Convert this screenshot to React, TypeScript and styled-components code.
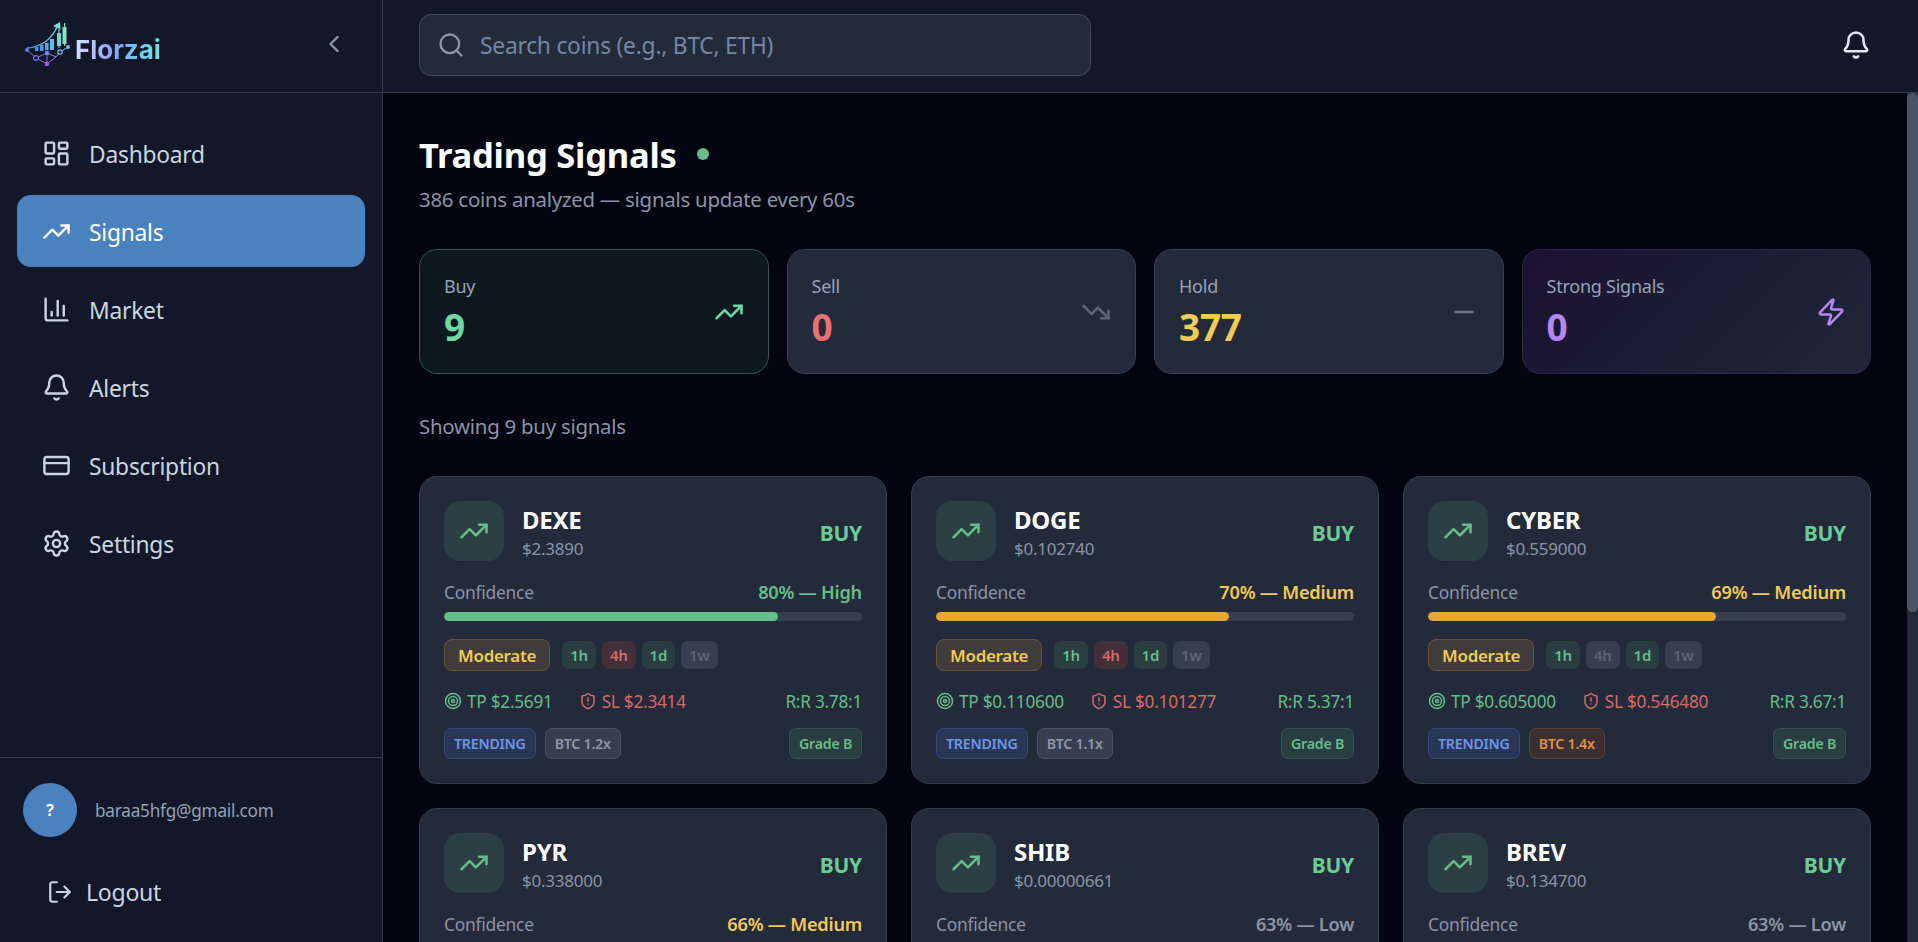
import React from 'react';
import styled, { createGlobalStyle } from 'styled-components';
import {
  Bell,
  ChartColumn,
  ChevronLeft,
  CreditCard,
  LayoutDashboard,
  LogOut,
  Minus,
  Search,
  Settings,
  ShieldAlert,
  Target,
  TrendingDown,
  TrendingUp,
  Zap,
} from 'lucide-react';

const GREEN = '#66bd8a';
const RED = '#d86a6a';
const AMBER = '#f0cb55';
const MUTED = '#8b95a7';

const GlobalStyle = createGlobalStyle`
  html, body {
    margin: 0;
    height: 100%;
    overflow: hidden;
    background: #02040f;
    font-family: 'Noto Sans', 'Open Sans', sans-serif;
    letter-spacing: -0.015em;
  }
  * { box-sizing: border-box; }
`;

const NAV = [
  { label: 'Dashboard', icon: LayoutDashboard },
  { label: 'Signals', icon: TrendingUp, active: true },
  { label: 'Market', icon: ChartColumn },
  { label: 'Alerts', icon: Bell },
  { label: 'Subscription', icon: CreditCard },
  { label: 'Settings', icon: Settings },
];

const SIGNALS = [
  { sym: 'DEXE', price: '$2.3890', pct: 80, level: 'High', tf: 'grgn', tp: '$2.5691', sl: '$2.3414', rr: '3.78', btc: '1.2x', hot: false },
  { sym: 'DOGE', price: '$0.102740', pct: 70, level: 'Medium', tf: 'grgn', tp: '$0.110600', sl: '$0.101277', rr: '5.37', btc: '1.1x', hot: false },
  { sym: 'CYBER', price: '$0.559000', pct: 69, level: 'Medium', tf: 'gngn', tp: '$0.605000', sl: '$0.546480', rr: '3.67', btc: '1.4x', hot: true },
  { sym: 'PYR', price: '$0.338000', pct: 66, level: 'Medium', tf: 'gngn', tp: '$0.361000', sl: '$0.331000', rr: '3.20', btc: '1.2x', hot: false },
  { sym: 'SHIB', price: '$0.00000661', pct: 63, level: 'Low', tf: 'gngn', tp: '$0.00000712', sl: '$0.00000648', rr: '3.92', btc: '1.1x', hot: false },
  { sym: 'BREV', price: '$0.134700', pct: 63, level: 'Low', tf: 'gngn', tp: '$0.144200', sl: '$0.131900', rr: '3.39', btc: '1.3x', hot: false },
];

function levelColor(level: string) {
  if (level === 'High') return GREEN;
  if (level === 'Medium') return AMBER;
  return MUTED;
}

function barColor(level: string) {
  if (level === 'High') return GREEN;
  if (level === 'Medium') return '#e9a63c';
  return '#7d8698';
}

function Logo() {
  return (
    <svg width="48" height="46" viewBox="0 0 48 46" fill="none">
      <defs>
        <linearGradient id="lgArrow" x1="0" y1="30" x2="36" y2="2" gradientUnits="userSpaceOnUse">
          <stop offset="0" stopColor="#4f7fe0" />
          <stop offset="1" stopColor="#6fe3d8" />
        </linearGradient>
        <linearGradient id="lgBars" x1="10" y1="0" x2="44" y2="0" gradientUnits="userSpaceOnUse">
          <stop offset="0" stopColor="#4a7fe6" />
          <stop offset="0.6" stopColor="#5cc6e8" />
          <stop offset="1" stopColor="#8ef0a8" />
        </linearGradient>
        <linearGradient id="lgNet" x1="2" y1="0" x2="44" y2="0" gradientUnits="userSpaceOnUse">
          <stop offset="0" stopColor="#7a6cf0" />
          <stop offset="0.5" stopColor="#9a5fe0" />
          <stop offset="1" stopColor="#6fc8e8" />
        </linearGradient>
      </defs>
      <path d="M3 28C17 27 28 19 34 5" stroke="url(#lgArrow)" strokeWidth="1.4" />
      <path d="M29 6L36 2L36.5 9.5Z" fill="#6fe3d8" />
      <g fill="url(#lgBars)">
        <rect x="11" y="27" width="3.5" height="4" />
        <rect x="16" y="25" width="3.5" height="6" />
        <rect x="21" y="23" width="3.5" height="7" />
        <rect x="26" y="19" width="4" height="11" />
        <rect x="33" y="13" width="4" height="13" />
        <rect x="34.4" y="9" width="1.2" height="19" />
        <rect x="38.5" y="7" width="4" height="17" />
        <rect x="40" y="3" width="1.2" height="23" />
      </g>
      <g stroke="url(#lgNet)" strokeWidth="1">
        <path d="M3 30L12 38L23 33L23 44L12 38M23 44L32 37L23 33M32 37L36 32L44 27" />
      </g>
      <circle cx="3" cy="30" r="2" fill="#6d78ee" />
      <circle cx="12" cy="38" r="2.4" fill="#12182a" stroke="#7c6cf0" strokeWidth="1.2" />
      <circle cx="23" cy="33" r="2.2" fill="#5aa0e8" />
      <circle cx="23" cy="44" r="2.2" fill="#a05ce0" />
      <circle cx="36" cy="32" r="2.2" fill="#12182a" stroke="#7cc4e8" strokeWidth="1.2" />
      <circle cx="44" cy="27" r="1.9" fill="#7cc4e8" />
    </svg>
  );
}

function SignalCard({ item }: { item: (typeof SIGNALS)[number] }) {
  const labels = ['1h', '4h', '1d', '1w'];
  return (
    <Card>
      <CardHead>
        <CoinIcon>
          <TrendingUp size={30} />
        </CoinIcon>
        <CoinText>
          <CoinName>{item.sym}</CoinName>
          <CoinPrice>{item.price}</CoinPrice>
        </CoinText>
        <Action>BUY</Action>
      </CardHead>
      <ConfRow>
        <ConfLabel>Confidence</ConfLabel>
        <ConfValue $color={levelColor(item.level)}>
          {item.pct}% — {item.level}
        </ConfValue>
      </ConfRow>
      <Track>
        <Fill $color={barColor(item.level)} style={{ width: `${item.pct}%` }} />
      </Track>
      <TagRow>
        <Strength>Moderate</Strength>
        {labels.map((label, i) => (
          <Chip key={label} $kind={item.tf[i]}>
            {label}
          </Chip>
        ))}
      </TagRow>
      <LevelRow>
        <Level $color={GREEN}>
          <Target size={18} />
          TP {item.tp}
        </Level>
        <Level $color={RED}>
          <ShieldAlert size={18} />
          SL {item.sl}
        </Level>
        <Ratio>R:R {item.rr}:1</Ratio>
      </LevelRow>
      <BadgeRow>
        <Badge $bg="#2a3655" $border="#35477a" $color="#6f98e8">TRENDING</Badge>
        {item.hot ? (
          <Badge $bg="#3a2f33" $border="#5a4238" $color="#e0914a">BTC {item.btc}</Badge>
        ) : (
          <Badge $bg="#363e50" $border="#4a5264" $color="#8f98a9">BTC {item.btc}</Badge>
        )}
        <GradeBadge>Grade B</GradeBadge>
      </BadgeRow>
    </Card>
  );
}

export default function App() {
  return (
    <Shell>
      <GlobalStyle />
      <Sidebar>
        <Brand>
          <BrandMark>
            <Logo />
            <BrandName>Florzai</BrandName>
          </BrandMark>
          <Collapse>
            <ChevronLeft size={28} />
          </Collapse>
        </Brand>
        <Nav>
          {NAV.map(({ label, icon: Icon, active }) => (
            <NavItem key={label} $active={active}>
              <Icon size={29} />
              <NavLabel>{label}</NavLabel>
            </NavItem>
          ))}
        </Nav>
        <Account>
          <User>
            <Avatar>?</Avatar>
            <Email>baraa5hfg@gmail.com</Email>
          </User>
          <Logout>
            <LogOut size={26} />
            Logout
          </Logout>
        </Account>
      </Sidebar>
      <Column>
        <TopBar>
          <SearchBox>
            <Search size={28} />
            <SearchText>Search coins (e.g., BTC, ETH)</SearchText>
          </SearchBox>
          <BellButton>
            <Bell size={30} />
          </BellButton>
        </TopBar>
        <Body>
          <Content>
            <TitleRow>
              <Title>Trading Signals</Title>
              <LiveDot />
            </TitleRow>
            <Subtitle>386 coins analyzed — signals update every 60s</Subtitle>
            <Stats>
              <Stat $bg="#0e1820" $border="#2d5a4c">
                <div>
                  <StatLabel>Buy</StatLabel>
                  <StatValue $color="#6ed8a0">9</StatValue>
                </div>
                <StatIcon $color="#6ed8a0"><TrendingUp size={30} /></StatIcon>
              </Stat>
              <Stat $bg="#232a3a" $border="#384154">
                <div>
                  <StatLabel>Sell</StatLabel>
                  <StatValue $color="#e57373">0</StatValue>
                </div>
                <StatIcon $color="#5d6679"><TrendingDown size={30} /></StatIcon>
              </Stat>
              <Stat $bg="#232a3a" $border="#384154">
                <div>
                  <StatLabel>Hold</StatLabel>
                  <StatValue $color={AMBER}>377</StatValue>
                </div>
                <StatIcon $color="#6b7485"><Minus size={30} /></StatIcon>
              </Stat>
              <Stat $bg="linear-gradient(135deg, #1a1130 0%, #202738 100%)" $border="#2f2650">
                <div>
                  <StatLabel>Strong Signals</StatLabel>
                  <StatValue $color="#b388f0">0</StatValue>
                </div>
                <StatIcon $color="#b388f0"><Zap size={30} /></StatIcon>
              </Stat>
            </Stats>
            <Showing>Showing 9 buy signals</Showing>
            <Grid>
              {SIGNALS.map((item) => (
                <SignalCard key={item.sym} item={item} />
              ))}
            </Grid>
          </Content>
          <ScrollRail>
            <ScrollThumb />
          </ScrollRail>
        </Body>
      </Column>
    </Shell>
  );
}

const Shell = styled.div`
  display: flex;
  height: 942px;
  overflow: hidden;
`;

const Sidebar = styled.aside`
  display: flex;
  flex-direction: column;
  flex: 0 0 383px;
  background: #12182a;
  border-right: 1px solid #343b4c;
`;

const Brand = styled.div`
  display: flex;
  align-items: center;
  justify-content: space-between;
  height: 93px;
  padding: 0 34px 0 24px;
  border-bottom: 1px solid #343b4c;
`;

const BrandMark = styled.div`
  display: flex;
  align-items: flex-end;
  gap: 3px;
  margin-bottom: 6px;
`;

const BrandName = styled.span`
  font-family: 'Inter', sans-serif;
  font-size: 26px;
  font-weight: 700;
  line-height: 32px;
  letter-spacing: 0;
  background: linear-gradient(100deg, #d8e6fc 0%, #939ff7 45%, #74c8f0 70%, #74e4d4 100%);
  -webkit-background-clip: text;
  background-clip: text;
  color: transparent;
`;

const Collapse = styled.div`
  display: flex;
  margin-bottom: 4px;
  color: #8b95a7;
`;

const Nav = styled.nav`
  display: flex;
  flex-direction: column;
  flex: 1;
  gap: 6px;
  padding: 24px 17px 0;
`;

const NavItem = styled.a<{ $active?: boolean }>`
  display: flex;
  align-items: center;
  gap: 18px;
  height: 72px;
  padding: 0 25px;
  border-radius: 14px;
  font-size: 22.8px;
  color: ${(p) => (p.$active ? '#ffffff' : '#cbd5e1')};
  background: ${(p) => (p.$active ? '#4a82c0' : 'transparent')};
`;

const NavLabel = styled.span`
  padding-top: 2px;
`;

const Account = styled.div`
  height: 185px;
  padding: 25px 23px 0;
  border-top: 1px solid #343b4c;
`;

const User = styled.div`
  display: flex;
  align-items: center;
  gap: 18px;
`;

const Avatar = styled.div`
  display: flex;
  align-items: center;
  justify-content: center;
  width: 54px;
  height: 54px;
  border-radius: 50%;
  background: #4a82c0;
  color: #ffffff;
  font-size: 16px;
  font-weight: 700;
`;

const Email = styled.span`
  font-size: 17.2px;
  color: #94a3b8;
`;

const Logout = styled.div`
  display: flex;
  align-items: center;
  gap: 13px;
  margin: 39px 0 0 24px;
  font-size: 23px;
  color: #cbd5e1;
`;

const Column = styled.div`
  display: flex;
  flex-direction: column;
  flex: 1;
  min-width: 0;
`;

const TopBar = styled.header`
  display: flex;
  flex: 0 0 93px;
  align-items: center;
  justify-content: space-between;
  padding: 0 47px 2px 36px;
  background: #12182a;
  border-bottom: 1px solid #343b4c;
`;

const SearchBox = styled.div`
  display: flex;
  align-items: center;
  gap: 15px;
  width: 672px;
  height: 62px;
  padding: 0 17px;
  border-radius: 12px;
  border: 1px solid #414a5c;
  background: #232a3a;
  color: #8b95a7;
`;

const SearchText = styled.span`
  font-size: 22.8px;
  color: #7488a6;
`;

const BellButton = styled.div`
  display: flex;
  color: #e2e8f0;
`;

const Body = styled.div`
  display: flex;
  flex: 1;
  min-height: 0;
`;

const Content = styled.main`
  flex: 1;
  min-width: 0;
  overflow: hidden;
  padding: 36px;
  background: #02040f;
`;

const ScrollRail = styled.div`
  flex: 0 0 11px;
  background: #232a3a;
`;

const ScrollThumb = styled.div`
  height: 519px;
  border-radius: 6px;
  background: #4b5568;
`;

const TitleRow = styled.div`
  display: flex;
  align-items: center;
  gap: 20px;
  height: 50px;
`;

const Title = styled.h1`
  margin: 0;
  font-size: 34.6px;
  font-weight: 700;
  color: #ffffff;
`;

const LiveDot = styled.span`
  width: 12px;
  height: 12px;
  border-radius: 50%;
  background: ${GREEN};
`;

const Subtitle = styled.p`
  margin: 7px 0 0;
  font-size: 20.4px;
  line-height: 26px;
  color: ${MUTED};
`;

const Stats = styled.div`
  display: grid;
  grid-template-columns: repeat(4, 1fr);
  gap: 18px;
  margin-top: 37px;
`;

const Stat = styled.div<{ $bg: string; $border: string }>`
  display: flex;
  align-items: center;
  justify-content: space-between;
  height: 125px;
  padding: 0 24px;
  border-radius: 18px;
  background: ${(p) => p.$bg};
  border: 1px solid ${(p) => p.$border};
`;

const StatLabel = styled.div`
  font-size: 18px;
  line-height: 24px;
  margin-top: 2px;
  margin-bottom: 5px;
  color: #94a3b8;
`;

const StatValue = styled.div<{ $color: string }>`
  font-size: 37px;
  font-weight: 700;
  line-height: 48px;
  color: ${(p) => p.$color};
`;

const StatIcon = styled.div<{ $color: string }>`
  display: flex;
  color: ${(p) => p.$color};
`;

const Showing = styled.div`
  margin: 39px 0 0;
  font-size: 20.4px;
  line-height: 26px;
  color: ${MUTED};
`;

const Grid = styled.div`
  display: grid;
  grid-template-columns: repeat(3, 1fr);
  gap: 24px;
  margin-top: 37px;
`;

const Card = styled.article`
  display: flex;
  flex-direction: column;
  height: 308px;
  padding: 24px;
  border-radius: 18px;
  background: #232a3a;
  border: 1px solid #2f4048;
`;

const CardHead = styled.div`
  display: flex;
  align-items: center;
  height: 60px;
`;

const CoinIcon = styled.div`
  display: flex;
  align-items: center;
  justify-content: center;
  flex: 0 0 60px;
  height: 60px;
  border-radius: 16px;
  background: #2c3f44;
  color: ${GREEN};
`;

const CoinText = styled.div`
  flex: 1;
  margin-left: 18px;
  padding-top: 4px;
`;

const CoinName = styled.div`
  font-size: 24px;
  font-weight: 700;
  line-height: 30px;
  color: #ffffff;
`;

const CoinPrice = styled.div`
  margin-top: 2px;
  font-size: 17px;
  line-height: 24px;
  color: ${MUTED};
`;

const Action = styled.div`
  margin-top: 4px;
  font-size: 21px;
  font-weight: 700;
  color: #6ccb96;
`;

const ConfRow = styled.div`
  display: flex;
  justify-content: space-between;
  margin-top: 19px;
  line-height: 24px;
  font-size: 17.4px;
`;

const ConfLabel = styled.span`
  color: ${MUTED};
`;

const ConfValue = styled.span<{ $color: string }>`
  font-size: 18.2px;
  font-weight: 600;
  color: ${(p) => p.$color};
`;

const Track = styled.div`
  height: 9px;
  margin-top: 8px;
  border-radius: 5px;
  background: #363e50;
  overflow: hidden;
`;

const Fill = styled.div<{ $color: string }>`
  height: 100%;
  border-radius: 5px;
  background: ${(p) => p.$color};
`;

const TagRow = styled.div`
  display: flex;
  align-items: center;
  gap: 6px;
  margin-top: 18px;
`;

const Strength = styled.span`
  display: flex;
  align-items: center;
  height: 32px;
  padding: 0 13px;
  margin-right: 6px;
  border-radius: 8px;
  border: 1px solid #6a5535;
  background: #413c3c;
  color: ${AMBER};
  font-size: 16.9px;
  font-weight: 600;
`;

const chipColors: Record<string, { bg: string; fg: string }> = {
  g: { bg: '#2a3e42', fg: GREEN },
  r: { bg: '#412f3a', fg: RED },
  n: { bg: '#363e50', fg: '#5d6679' },
};

const Chip = styled.span<{ $kind: string }>`
  display: flex;
  align-items: center;
  height: 28px;
  padding: 0 8px;
  border-radius: 7px;
  font-size: 15px;
  font-weight: 600;
  background: ${(p) => chipColors[p.$kind].bg};
  color: ${(p) => chipColors[p.$kind].fg};
`;

const LevelRow = styled.div`
  display: flex;
  align-items: center;
  gap: 26px;
  height: 24px;
  margin-top: 18px;
  font-size: 17.2px;
`;

const Level = styled.span<{ $color: string }>`
  display: flex;
  align-items: center;
  gap: 5px;
  color: ${(p) => p.$color};
`;

const Ratio = styled.span`
  margin-left: auto;
  color: ${GREEN};
`;

const BadgeRow = styled.div`
  display: flex;
  align-items: center;
  gap: 9px;
  margin-top: 15px;
`;

const Badge = styled.span<{ $bg: string; $border: string; $color: string }>`
  display: flex;
  align-items: center;
  height: 31px;
  padding: 0 9px;
  border-radius: 7px;
  font-size: 14.2px;
  font-weight: 600;
  background: ${(p) => p.$bg};
  border: 1px solid ${(p) => p.$border};
  color: ${(p) => p.$color};
`;

const GradeBadge = styled(Badge).attrs({ $bg: '#2a3e42', $border: '#35524e', $color: GREEN })`
  margin-left: auto;
`;
